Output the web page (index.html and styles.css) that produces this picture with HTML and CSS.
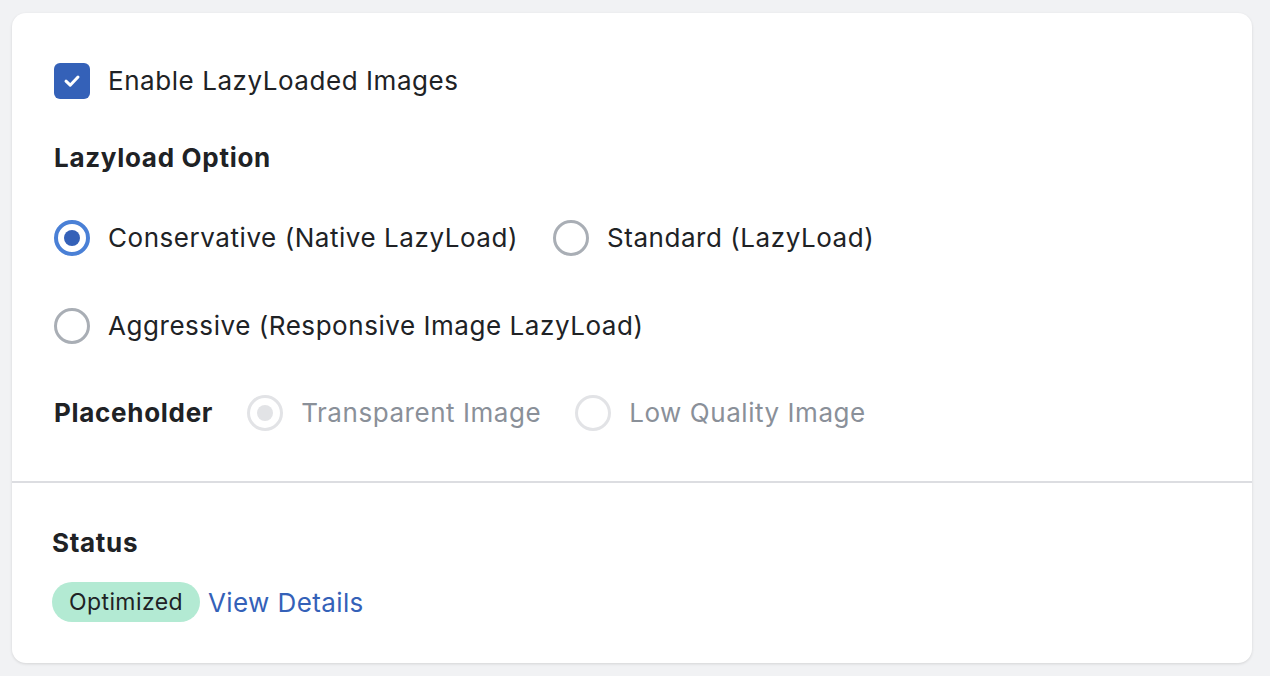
FILE: index.html
```html
<!DOCTYPE html>
<html lang="en">
<head>
  <meta charset="UTF-8">
  <meta name="viewport" content="width=device-width, initial-scale=1.0">
  <title>LazyLoad Settings</title>
  <link rel="stylesheet" href="styles.css">
</head>
<body>
  <div class="card">
    <div class="card-body">
      <label class="check-row">
        <span class="checkbox">
          <svg viewBox="0 0 22 22" width="22" height="22"><path d="M5 11.2l4.2 4 7.8-8.2" fill="none" stroke="#fff" stroke-width="3" stroke-linecap="round" stroke-linejoin="round"/></svg>
        </span>
        Enable LazyLoaded Images
      </label>

      <h2 class="title">Lazyload Option</h2>

      <div class="radio-group">
        <label class="radio-row">
          <span class="radio checked"></span>
          Conservative (Native LazyLoad)
        </label>
        <label class="radio-row">
          <span class="radio"></span>
          Standard (LazyLoad)
        </label>
      </div>
      <div class="radio-group">
        <label class="radio-row">
          <span class="radio"></span>
          Aggressive (Responsive Image LazyLoad)
        </label>
      </div>

      <div class="placeholder-row">
        <span class="title inline">Placeholder</span>
        <label class="radio-row disabled">
          <span class="radio checked"></span>
          Transparent Image
        </label>
        <label class="radio-row disabled">
          <span class="radio"></span>
          Low Quality Image
        </label>
      </div>
    </div>

    <div class="card-footer">
      <h2 class="title">Status</h2>
      <div class="status-row">
        <span class="badge">Optimized</span>
        <a class="link" href="#">View Details</a>
      </div>
    </div>
  </div>
</body>
</html>
```

FILE: styles.css
```css
* { box-sizing: border-box; margin: 0; padding: 0; }
body {
  font-family: Inter, "Noto Sans", sans-serif;
  background-color: #f1f2f4;
  color: #202225;
  padding: 13px 18px 13px 12px;
}
.card {
  background: #fff;
  border-radius: 14px;
  box-shadow: 0 1px 3px rgba(0, 0, 0, 0.12);
  height: 650px;
}
.card-body {
  padding: 50px 42px 50px 42px;
  border-bottom: 2px solid #dcdde1;
}
.check-row, .radio-row {
  display: flex;
  align-items: center;
  font-size: 26px;
  letter-spacing: 0.55px;
  line-height: 36px;
  height: 36px;
}
.checkbox {
  width: 36px;
  height: 36px;
  border-radius: 6px;
  background: #3461b8;
  display: flex;
  align-items: center;
  justify-content: center;
  margin-right: 18px;
  flex-shrink: 0;
}
.checkbox svg { display: block; }
.title {
  font-size: 26px;
  font-weight: 700;
  letter-spacing: 0.7px;
  line-height: 36px;
  margin-top: 41px;
}
.title.inline { margin-top: 0; }
.radio-group {
  display: flex;
  gap: 35px;
  margin-top: 44px;
}
.radio-group + .radio-group { margin-top: 52px; }
.radio {
  width: 36px;
  height: 36px;
  border-radius: 50%;
  border: 3px solid #a9aeb5;
  margin-right: 18px;
  position: relative;
  flex-shrink: 0;
}
.radio.checked { border: 4px solid #4a80d6; }
.radio.checked::after {
  content: "";
  position: absolute;
  left: 50%;
  top: 50%;
  width: 16px;
  height: 16px;
  margin: -8px 0 0 -8px;
  border-radius: 50%;
  background: #3461b8;
}
.placeholder-row {
  display: flex;
  align-items: center;
  gap: 34px;
  margin-top: 51px;
}
.radio-row.disabled { color: #8a9099; }
.radio-row.disabled .radio { border: 3px solid #e2e3e6; }
.radio-row.disabled .radio.checked::after { background: #e2e3e6; }
.card-footer { padding: 0 42px 41px 40px; }
.card-footer .title { margin-top: 42px; }
.status-row {
  display: flex;
  align-items: center;
  gap: 8px;
  margin-top: 21px;
}
.badge {
  background: #b3ead3;
  color: #202225;
  border-radius: 20px;
  font-size: 23px;
  letter-spacing: 0.4px;
  height: 40px;
  line-height: 40px;
  padding: 0 17px;
}
.link {
  color: #3461b8;
  text-decoration: none;
  font-size: 26px;
  letter-spacing: 0.4px;
}
```
